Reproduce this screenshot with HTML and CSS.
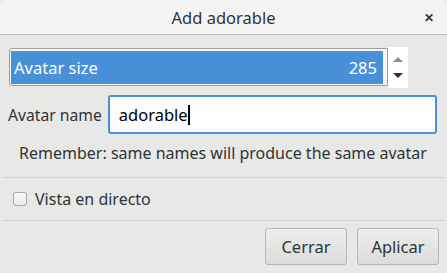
FILE: index.html
```html
<!DOCTYPE html>
<html lang="es">

<head>
    <meta charset="UTF-8">
    <link rel="stylesheet" href="styles.css">
    <title>Add adorable</title>
</head>

<body>
    <div class="window">
        <header class="titlebar">
            <span class="title">Add adorable</span>
            <span class="close">&#x2715;</span>
        </header>

        <div class="content">
            <div class="spin-row">
                <div class="spin-entry">
                    <div class="spin-fill">
                        <span>Avatar size</span>
                        <span>285</span>
                    </div>
                </div>
                <div class="spin-buttons">
                    <span class="arrow up"></span>
                    <span class="arrow down"></span>
                </div>
            </div>

            <div class="name-row">
                <label for="avatarName">Avatar name</label>
                <div class="name-entry">adorable<span class="caret"></span></div>
            </div>

            <p class="hint">Remember: same names will produce the same avatar</p>
        </div>

        <div class="separator"></div>

        <div class="check-row">
            <span class="checkbox"></span>
            <span>Vista en directo</span>
        </div>

        <div class="separator"></div>

        <div class="actions">
            <button>Cerrar</button>
            <button>Aplicar</button>
        </div>
    </div>
</body>

</html>
```

FILE: styles.css
```css
body {
    margin: 0;
    background: #e8e8e7;
    font-family: 'Noto Sans', sans-serif;
    font-size: 16px;
    color: #2e3436;
}

.window {
    width: 447px;
    height: 273px;
    background: #e8e8e7;
}

.titlebar {
    height: 34px;
    background: #f3f3f3;
    border-bottom: 1px solid #bdbdbb;
    border-radius: 6px 6px 0 0;
    display: flex;
    align-items: center;
    justify-content: center;
    position: relative;
}

.title {
    font-size: 16.5px;
    color: #2e3436;
}

.close {
    position: absolute;
    right: 13px;
    top: 9px;
    font-size: 12px;
    font-weight: bold;
    color: #2e3436;
}

.content {
    padding: 12px 10px 0 9px;
}

.spin-row {
    display: flex;
    width: 399px;
    height: 41px;
}

.spin-entry {
    flex: 1;
    margin-top: 1px;
    height: 38px;
    border: 1px solid #9e9e9e;
    border-radius: 3px 0 0 3px;
    padding: 2px 4px 1px 1px;
    box-sizing: border-box;
    background: #f6f6f6;
}

.spin-fill {
    height: 100%;
    background: #4a90d9;
    color: #fff;
    display: flex;
    justify-content: space-between;
    align-items: center;
    padding: 0 6px 0 3px;
    font-size: 16.5px;
}

.spin-buttons {
    width: 20px;
    background: #fff;
    display: flex;
    flex-direction: column;
    justify-content: space-around;
    align-items: center;
    padding: 4px 0;
    box-sizing: border-box;
}

.arrow {
    width: 0;
    height: 0;
    border-left: 5px solid transparent;
    border-right: 5px solid transparent;
}

.arrow.up {
    border-bottom: 5px solid #8c8c8c;
}

.arrow.down {
    border-top: 5px solid #2e3436;
}

.name-row {
    display: flex;
    align-items: center;
    margin-top: 7px;
    margin-left: -1px;
    gap: 6px;
}

.name-row label {
    font-size: 15.7px;
}

.name-entry {
    flex: 1;
    height: 39px;
    box-sizing: border-box;
    border: 2px solid #4a90d9;
    border-radius: 3px;
    background: #fdfdfd;
    display: flex;
    align-items: center;
    padding-left: 9px;
    font-size: 16.5px;
    color: #000;
}

.caret {
    width: 2px;
    height: 20px;
    background: #000;
}

.hint {
    margin: 8px 0 0;
    text-align: center;
    font-size: 16px;
    line-height: 22px;
}

.separator {
    height: 1px;
    background: #d3d3d1;
    margin: 13px 2px 0;
}

.check-row {
    display: flex;
    align-items: center;
    gap: 8px;
    padding-left: 13px;
    height: 42px;
    font-size: 16px;
}

.check-row + .separator {
    margin-top: 0;
}

.checkbox {
    width: 12px;
    height: 12px;
    border: 1px solid #a9a9a7;
    border-radius: 3px;
    background: linear-gradient(#fafafa, #e9e9e9);
}

.actions {
    display: flex;
    justify-content: flex-end;
    gap: 10px;
    padding: 7px 8px 0 0;
}

button {
    width: 82px;
    height: 37px;
    font-family: 'Noto Sans', sans-serif;
    font-size: 16.5px;
    color: #2e3436;
    border: 1px solid #b6b6b3;
    border-radius: 3px;
    background: linear-gradient(#ededec, #dcdcda);
}
```
